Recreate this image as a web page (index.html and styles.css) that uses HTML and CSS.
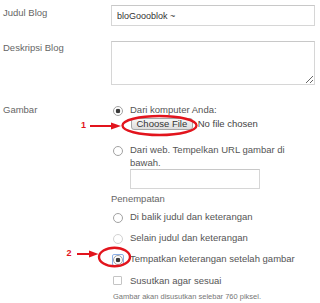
FILE: index.html
```html
<!DOCTYPE html>
<html lang="id">

<head>
    <meta charset="UTF-8">
    <title>Pengaturan Blog</title>
    <link rel="stylesheet" href="styles.css">
</head>

<body>
    <div class="page">
        <div class="row r-title">
            <div class="label">Judul Blog</div>
            <input class="text-in" type="text" value="bloGoooblok ~">
        </div>
        <div class="row r-desc">
            <div class="label">Deskripsi Blog</div>
            <textarea class="desc"></textarea>
        </div>
        <div class="row r-image">
            <div class="label">Gambar</div>
            <div class="choices">
                <div class="opt"><span class="radio on"></span><span>Dari komputer Anda:</span></div>
                <div class="file">
                    <span class="file-btn">Choose File</span>
                    <span class="file-name">No file chosen</span>
                </div>
                <div class="opt opt-web"><span class="radio"></span><span>Dari web. Tempelkan URL gambar di<br>bawah.</span></div>
                <input class="url-in" type="text">
                <div class="heading">Penempatan</div>
                <div class="opt place first"><span class="radio"></span><span>Di balik judul dan keterangan</span></div>
                <div class="opt place"><span class="radio dim"></span><span>Selain judul dan keterangan</span></div>
                <div class="opt place"><span class="focus"><span class="radio on"></span></span><span>Tempatkan keterangan setelah gambar</span></div>
                <div class="opt place"><span class="check"></span><span>Susutkan agar sesuai</span></div>
                <div class="note">Gambar akan disusutkan selebar 760 piksel.</div>
            </div>
        </div>

        <!-- anotasi merah -->
        <svg class="marks" width="320" height="303" viewBox="0 0 320 303">
            <g fill="none" stroke="#e2141d" stroke-width="2.4">
                <ellipse cx="159.5" cy="125.5" rx="37" ry="9.5" />
                <ellipse cx="114.5" cy="257" rx="15.5" ry="9.3" />
            </g>
            <g stroke="#e2141d" stroke-width="2">
                <line x1="90" y1="126" x2="113" y2="126" />
                <line x1="77" y1="254" x2="91" y2="254" />
            </g>
            <g fill="#e2141d">
                <polygon points="121,126 111,122.5 111,129.5" />
                <polygon points="98.5,254 89,250.5 89,257.5" />
            </g>
            <text class="num" x="81" y="127.5">1</text>
            <text class="num" x="66.5" y="255.5">2</text>
        </svg>
    </div>
</body>

</html>
```

FILE: styles.css
```css
body {
    margin: 0;
    background: #fff;
    font-family: "Liberation Sans", Arial, sans-serif;
    font-size: 9.5px;
}

.page {
    position: relative;
    width: 320px;
    height: 303px;
    padding-top: 5px;
    box-sizing: border-box;
    overflow: hidden;
}

.row {
    display: grid;
    grid-template-columns: 111px 204px;
}

.label {
    line-height: 13px;
    color: #666;
    padding-left: 3px;
}

.r-title .label {
    padding-top: 1px;
}

.r-desc {
    margin-top: 15px;
}

.r-image {
    margin-top: 18px;
}

.text-in,
.url-in,
.desc {
    display: block;
    box-sizing: border-box;
    margin: 0;
    border: 1px solid #d6d6d6;
    border-top-color: #c8c8c8;
    border-radius: 0;
    background: #fff;
    font-family: "Liberation Sans", Arial, sans-serif;
    outline: none;
}

.text-in {
    width: 204px;
    height: 21px;
    padding: 0 5px;
    font-size: 9px;
    color: #333;
}

.desc {
    width: 204px;
    height: 44px;
    padding: 3px 5px;
}

.opt {
    display: flex;
    align-items: flex-start;
    line-height: 13px;
    color: #555;
}

.radio {
    flex: none;
    width: 10px;
    height: 10px;
    box-sizing: border-box;
    margin: 3px 7px 0 2px;
    border: 1px solid #a2a2a2;
    border-radius: 50%;
    background: #fff;
}

.radio.on {
    background: radial-gradient(circle, #3a3a3a 0 2px, #fff 2.6px);
}

.radio.dim {
    border-color: #d2d2d2;
}

.focus {
    flex: none;
    display: flex;
    width: 12px;
    height: 12px;
    box-sizing: border-box;
    margin: 2px 6px 0 1px;
    border: 1px solid #8db0e8;
    border-radius: 2px;
}

.focus .radio {
    margin: 0;
}

.file {
    display: flex;
    align-items: center;
    height: 12px;
    margin: 2px 0 0 20px;
    line-height: 10px;
}

.file-btn {
    height: 12px;
    box-sizing: border-box;
    padding: 0 4.5px;
    border: 1px solid #a6a6a6;
    border-radius: 3px;
    background: linear-gradient(#f7f7f7, #dddddd);
    color: #333;
}

.file-name {
    margin-left: 5px;
    color: #444;
}

.opt-web {
    margin-top: 13px;
}

.url-in {
    width: 130px;
    height: 20px;
    margin-left: 19px;
}

.heading {
    margin-top: 3px;
    line-height: 13px;
    color: #666;
}

.place {
    margin-top: 8px;
}

.place.first {
    margin-top: 5px;
}

.check {
    flex: none;
    width: 9px;
    height: 9px;
    box-sizing: border-box;
    margin: 1.5px 8px 0 2px;
    border: 1px solid #c4c4c4;
    border-radius: 1px;
    background: #fff;
}

.note {
    margin: 5px 0 0 2px;
    font-size: 7.5px;
    line-height: 10px;
    color: #777;
}

.marks {
    position: absolute;
    left: 0;
    top: 0;
    pointer-events: none;
}

.num {
    font-family: "Liberation Sans", Arial, sans-serif;
    font-size: 9px;
    font-weight: bold;
    fill: #e2141d;
}
```
